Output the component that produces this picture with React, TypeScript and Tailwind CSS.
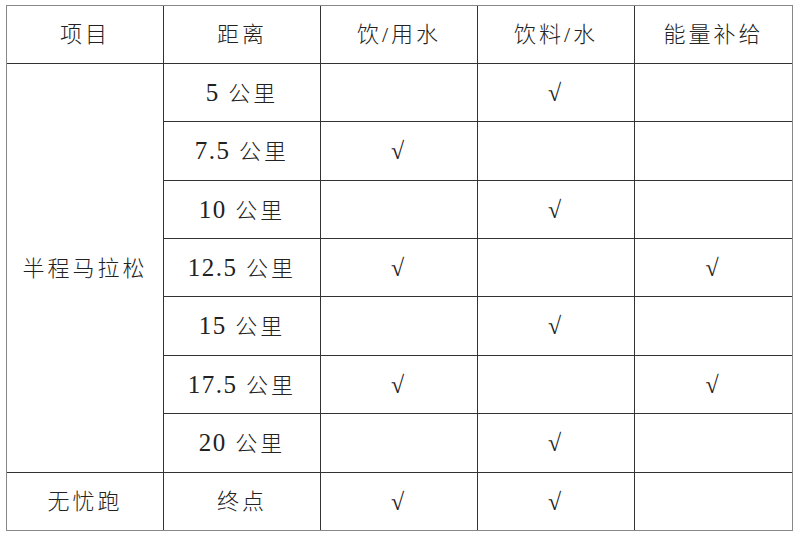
const font = { fontFamily: '"Liberation Serif", "Noto Sans CJK SC", serif' }

type Row = { km: string; a: boolean; b: boolean; c: boolean }

const half: Row[] = [
  { km: '5', a: false, b: true, c: false },
  { km: '7.5', a: true, b: false, c: false },
  { km: '10', a: false, b: true, c: false },
  { km: '12.5', a: true, b: false, c: true },
  { km: '15', a: false, b: true, c: false },
  { km: '17.5', a: true, b: false, c: true },
  { km: '20', a: false, b: true, c: false },
]

const heights = ['h-[58px]', 'h-[59px]', 'h-[58px]', 'h-[58px]', 'h-[59px]', 'h-[58px]', 'h-[59px]']

const cell = 'border border-[#333] text-center align-middle p-0 font-light'

function Check({ on }: { on: boolean }) {
  return <td className={`${cell} text-[24px]`}>{on ? '√' : ''}</td>
}

export default function App() {
  return (
    <div className="w-[800px] h-[535px] bg-white pt-[5px] pl-[6px]" style={font}>
      <table className="border-collapse table-fixed w-[786px] text-[22px] text-[#222] tracking-[3px] outline outline-1 outline-[#888] -outline-offset-1">
        <colgroup>
          <col className="w-[157px]" />
          <col className="w-[157px]" />
          <col className="w-[157px]" />
          <col className="w-[157px]" />
          <col className="w-[158px]" />
        </colgroup>
        <thead>
          <tr className="h-[58px]">
            <th className={cell}>项目</th>
            <th className={cell}>距离</th>
            <th className={cell}>饮/用水</th>
            <th className={cell}>饮料/水</th>
            <th className={cell}>能量补给</th>
          </tr>
        </thead>
        <tbody>
          {half.map((r, i) => (
            <tr key={r.km} className={heights[i]}>
              {i === 0 && (
                <td rowSpan={7} className={cell}>
                  半程马拉松
                </td>
              )}
              <td className={cell}>
                <span className="text-[25px] tracking-[1.5px]">{r.km}</span> 公里
              </td>
              <Check on={r.a} />
              <Check on={r.b} />
              <Check on={r.c} />
            </tr>
          ))}
          <tr className="h-[58px]">
            <td className={cell}>无忧跑</td>
            <td className={cell}>终点</td>
            <Check on={true} />
            <Check on={true} />
            <Check on={false} />
          </tr>
        </tbody>
      </table>
    </div>
  )
}
